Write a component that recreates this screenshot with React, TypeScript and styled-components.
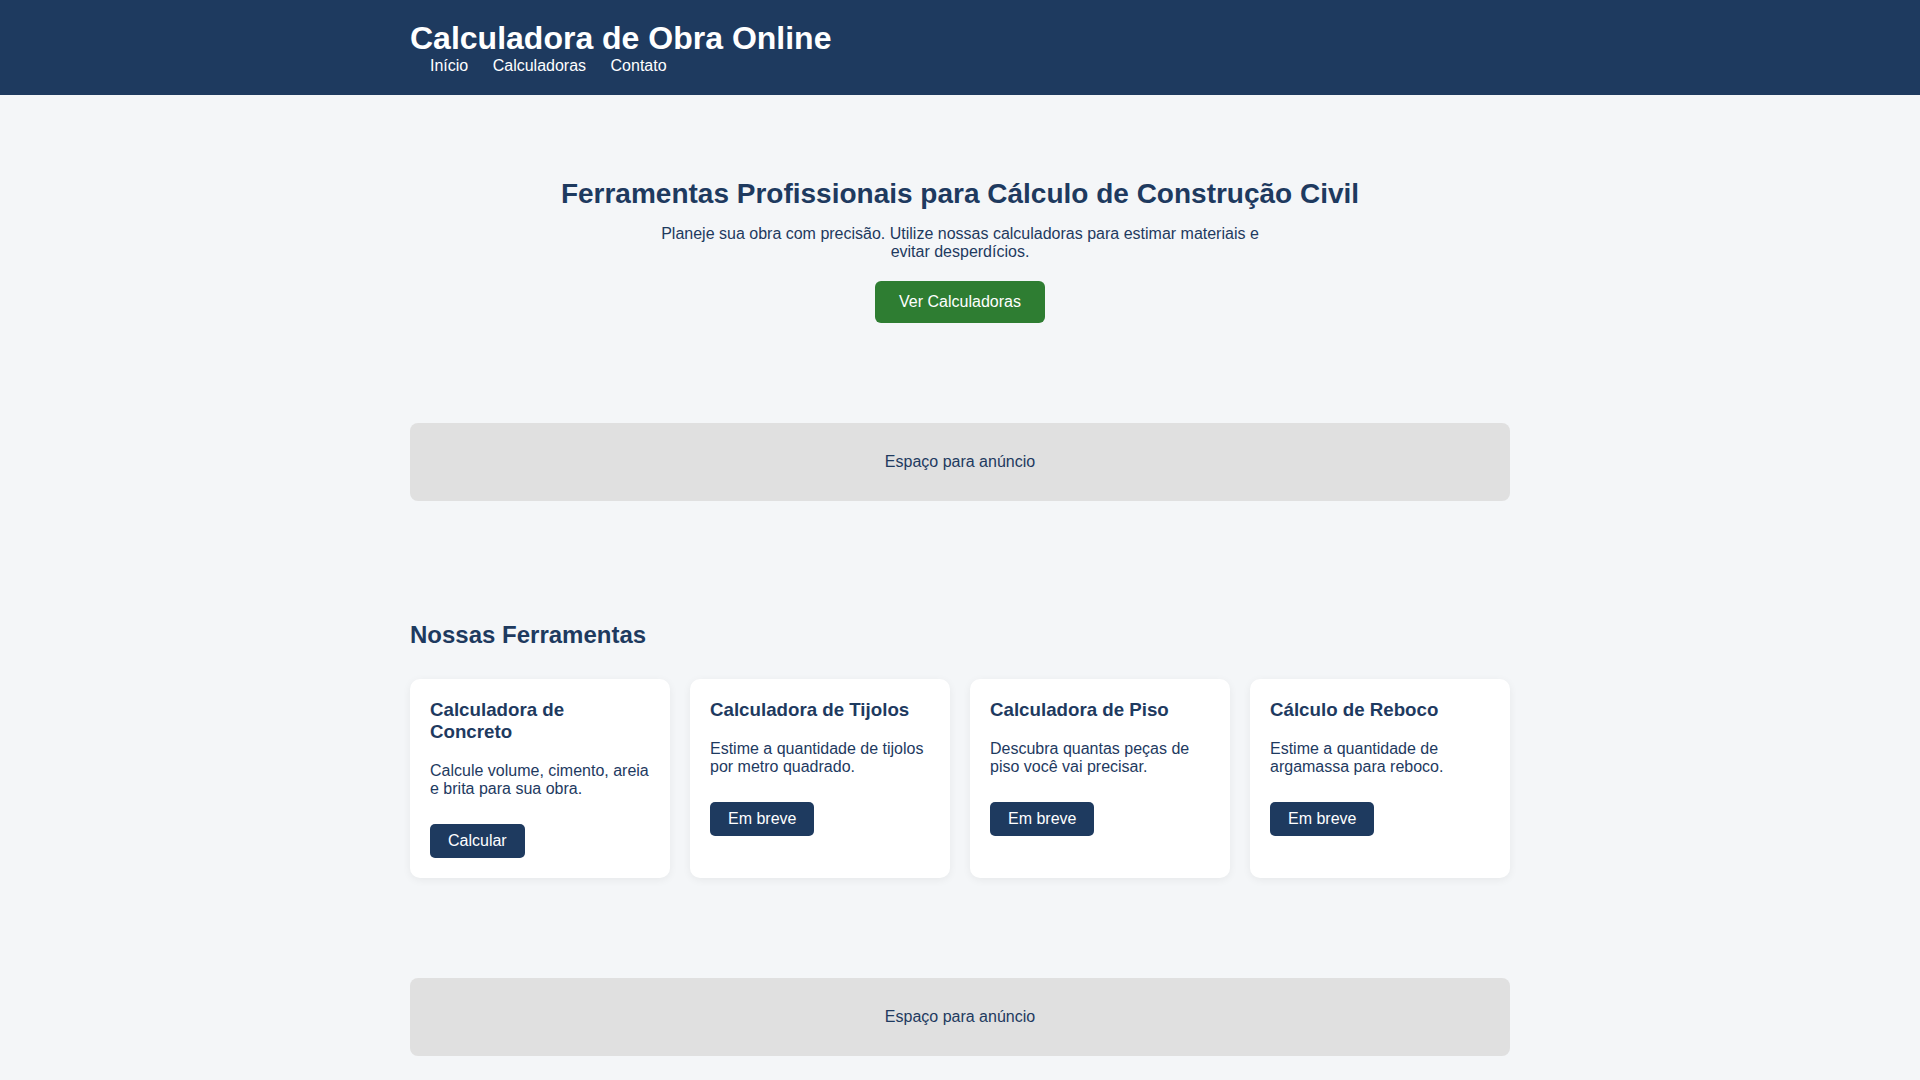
import styled, { createGlobalStyle } from "styled-components";

const navy = "#1e3a5f";

const GlobalStyle = createGlobalStyle`
  * {
    box-sizing: border-box;
  }
  body {
    margin: 0;
    background: #f4f6f8;
    color: ${navy};
    font-family: "Liberation Sans", Arial, sans-serif;
  }
`;

const tools = [
  {
    title: "Calculadora de Concreto",
    text: "Calcule volume, cimento, areia e brita para sua obra.",
    action: "Calcular",
  },
  {
    title: "Calculadora de Tijolos",
    text: "Estime a quantidade de tijolos por metro quadrado.",
    action: "Em breve",
  },
  {
    title: "Calculadora de Piso",
    text: "Descubra quantas peças de piso você vai precisar.",
    action: "Em breve",
  },
  {
    title: "Cálculo de Reboco",
    text: "Estime a quantidade de argamassa para reboco.",
    action: "Em breve",
  },
];

function App() {
  return (
    <>
      <GlobalStyle />
      <Header>
        <Container>
          <Logo>Calculadora de Obra Online</Logo>
          <Nav>
            <NavLink href="#">Início</NavLink> <NavLink href="#">Calculadoras</NavLink>{" "}
            <NavLink href="#">Contato</NavLink>
          </Nav>
        </Container>
      </Header>

      <Hero>
        <HeroTitle>Ferramentas Profissionais para Cálculo de Construção Civil</HeroTitle>
        <HeroText>
          Planeje sua obra com precisão. Utilize nossas calculadoras para estimar materiais e
          evitar desperdícios.
        </HeroText>
        <PrimaryButton href="#ferramentas">Ver Calculadoras</PrimaryButton>
      </Hero>

      <Container>
        <AdSlot>Espaço para anúncio</AdSlot>
      </Container>

      <Tools id="ferramentas">
        <Container>
          <SectionTitle>Nossas Ferramentas</SectionTitle>
          <CardGrid>
            {tools.map((tool) => (
              <Card key={tool.title}>
                <CardTitle>{tool.title}</CardTitle>
                <CardText>{tool.text}</CardText>
                <CardButton href="#">{tool.action}</CardButton>
              </Card>
            ))}
          </CardGrid>
        </Container>
      </Tools>

      <Container>
        <AdSlot>Espaço para anúncio</AdSlot>
      </Container>
    </>
  );
}
export default App;

const Container = styled.div`
  max-width: 1100px;
  margin: 0 auto;
`;

const Header = styled.header`
  background: ${navy};
  color: #fff;
  padding: 20px 0;
`;

const Logo = styled.h1`
  margin: 0;
  font-size: 32px;
  font-weight: 700;
`;

const Nav = styled.nav`
  font-size: 16px;
`;

const NavLink = styled.a`
  color: #fff;
  text-decoration: none;
  margin-left: 20px;
`;

const Hero = styled.section`
  padding: 60px 20px;
  text-align: center;
`;

const HeroTitle = styled.h2`
  font-size: 28px;
  margin: 23px 0 15px;
`;

const HeroText = styled.p`
  max-width: 600px;
  margin: 0 auto 19.5px;
  font-size: 16px;
`;

const PrimaryButton = styled.a`
  display: inline-block;
  background: #2e7d32;
  color: #fff;
  text-decoration: none;
  font-size: 16px;
  padding: 12px 24px;
  border-radius: 6px;
`;

const AdSlot = styled.div`
  margin: 40px 0;
  padding: 30px;
  background: #e0e0e0;
  border-radius: 8px;
  text-align: center;
  font-size: 16px;
`;

const Tools = styled.section`
  padding: 60px 0;
`;

const SectionTitle = styled.h2`
  font-size: 24px;
  margin: 20px 0 30px;
`;

const CardGrid = styled.div`
  display: grid;
  grid-template-columns: repeat(4, 1fr);
  gap: 20px;
`;

const Card = styled.div`
  background: #fff;
  border-radius: 10px;
  padding: 20px;
  box-shadow: 0 2px 8px rgba(0, 0, 0, 0.06);
`;

const CardTitle = styled.h3`
  font-size: 18.72px;
  margin: 0 0 19.4px;
`;

const CardText = styled.p`
  font-size: 16px;
  margin: 0 0 26px;
`;

const CardButton = styled.a`
  display: inline-block;
  background: ${navy};
  color: #fff;
  text-decoration: none;
  font-size: 16px;
  padding: 8px 18px;
  border-radius: 5px;
`;
